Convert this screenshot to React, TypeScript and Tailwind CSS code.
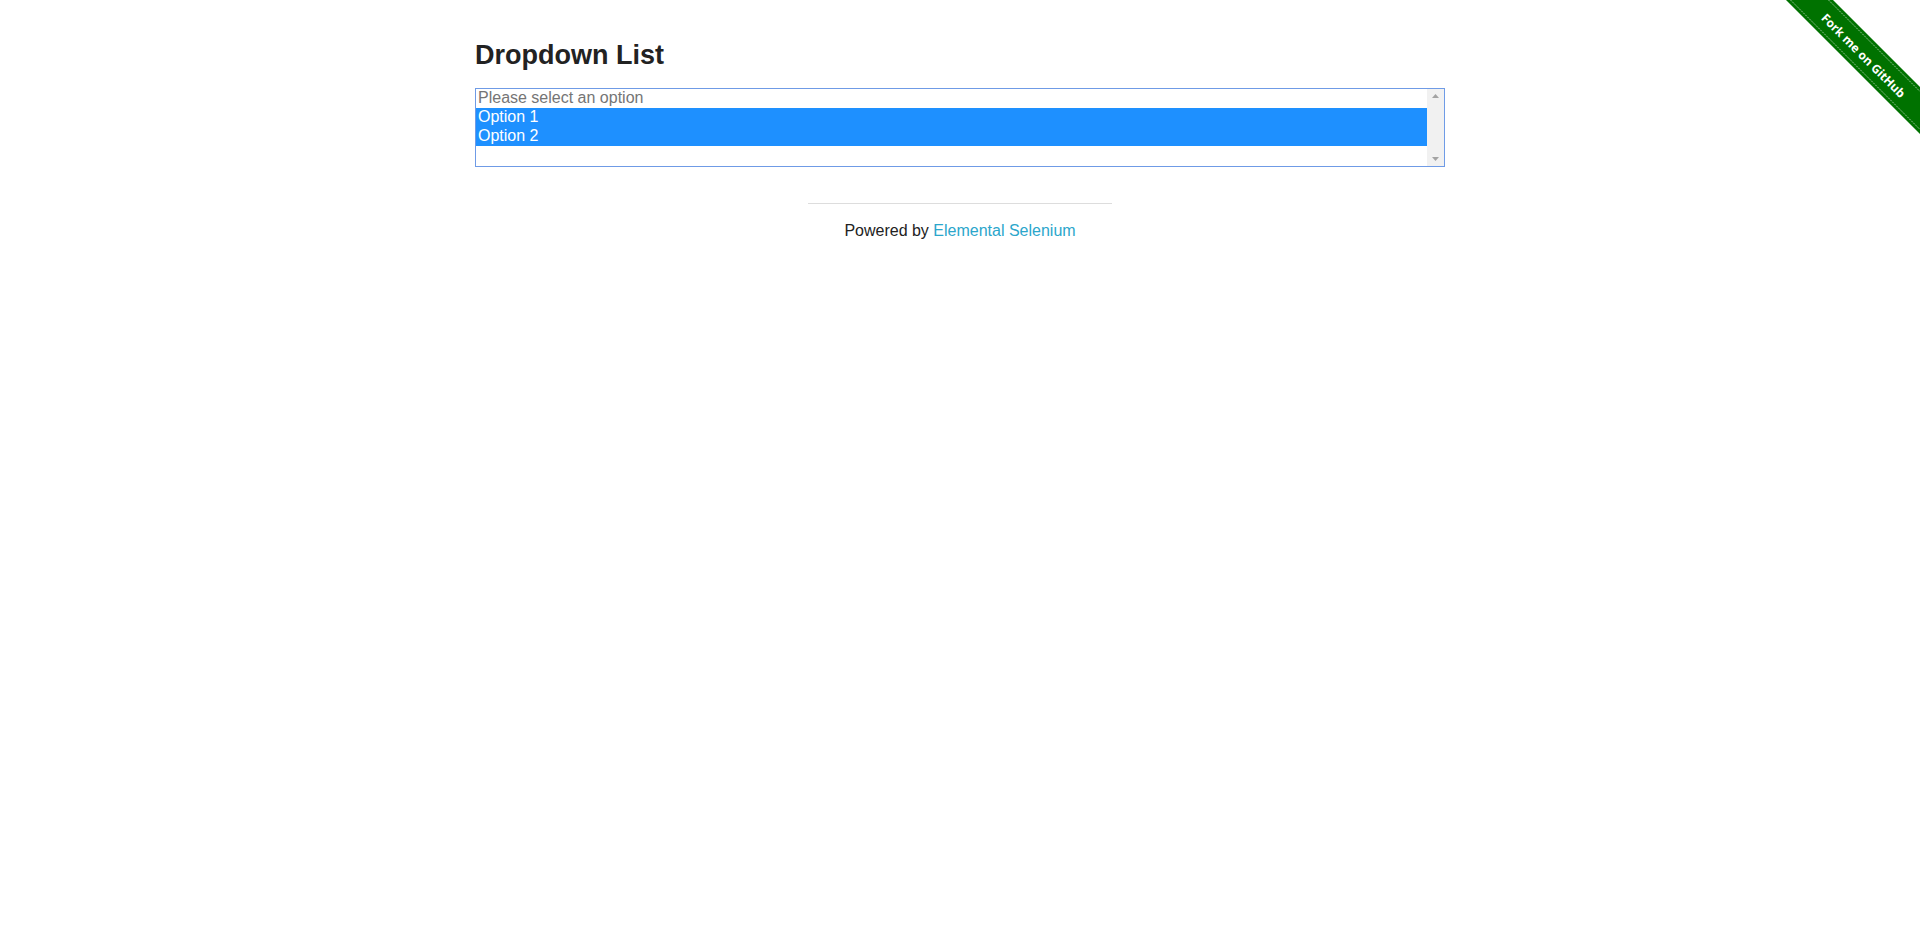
import React from "react";

function Ribbon() {
  return (
    <a href="#" className="absolute top-0 right-0 block w-[149px] h-[149px]">
      <svg width="149" height="149" viewBox="0 0 149 149">
        <polygon points="15,0 62,0 149,87 149,134" fill="#007200" />
        <line x1="19.5" y1="0" x2="149" y2="129.5" stroke="#ffffff" strokeOpacity="0.55" strokeWidth="1" strokeDasharray="2 1" />
        <line x1="57.5" y1="0" x2="149" y2="91.5" stroke="#ffffff" strokeOpacity="0.55" strokeWidth="1" strokeDasharray="2 1" />
        <text
          x="0"
          y="0"
          transform="translate(92.5,55.5) rotate(45)"
          textAnchor="middle"
          dominantBaseline="central"
          fill="#ffffff"
          fontFamily="'Open Sans', 'DejaVu Sans', sans-serif"
          fontWeight="700"
          fontSize="12"
        >
          Fork me on GitHub
        </text>
      </svg>
    </a>
  );
}

function Scrollbar() {
  return (
    <div className="w-[17px] bg-[#f1f1f1] flex flex-col justify-between items-center py-[4px]">
      <svg width="9" height="6" viewBox="0 0 9 6">
        <polygon points="4.5,1 8,5 1,5" fill="#a3a3a3" />
      </svg>
      <svg width="9" height="6" viewBox="0 0 9 6">
        <polygon points="1,1 8,1 4.5,5" fill="#a3a3a3" />
      </svg>
    </div>
  );
}

export default function App() {
  return (
    <div className="relative min-h-[925px] bg-white font-['Liberation_Sans',Arial,sans-serif] text-[#222222]">
      <Ribbon />
      <div className="w-[1000px] mx-auto px-[15px]">
        <h3 className="pt-[39px] text-[27px] leading-[32px] font-bold text-[#222222]">Dropdown List</h3>
        <div className="mt-[17px] h-[79px] border border-[#6f9be6] flex text-[16px]">
          <div className="flex-1 flex flex-col">
            <div className="h-[19px] leading-[18px] px-[2px] text-[#757575]">Please select an option</div>
            <div className="h-[19px] leading-[18px] px-[2px] bg-[#1e90ff] text-white">Option 1</div>
            <div className="h-[19px] leading-[18px] px-[2px] bg-[#1e90ff] text-white">Option 2</div>
          </div>
          <Scrollbar />
        </div>
      </div>
      <div className="mt-[36px] flex flex-col items-center">
        <div className="w-[304px] h-px bg-[#dddddd]" />
        <div className="mt-[17px] text-[16px] leading-[20px] text-[#222222]">
          Powered by <a href="#" className="text-[#2ba6cb]">Elemental Selenium</a>
        </div>
      </div>
    </div>
  );
}
